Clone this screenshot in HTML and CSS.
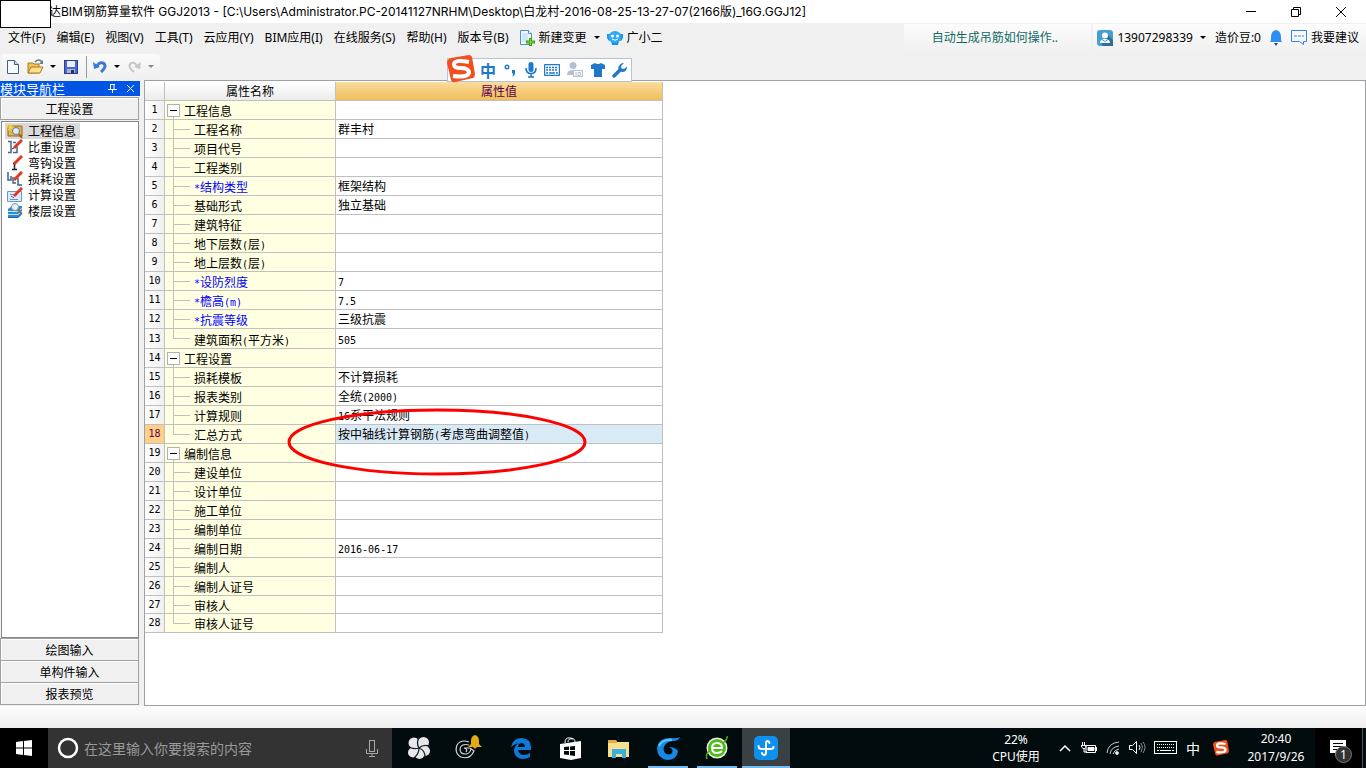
FILE: index.html
```html
<!DOCTYPE html>
<html lang="zh-CN">
<head>
<meta charset="utf-8">
<title>BIM钢筋算量软件 GGJ2013</title>
<link rel="stylesheet" href="styles.css">
</head>
<body>
<div class="desktop">
<header class="titlebar">
  <span class="mask"></span>
  <h1 class="title">达BIM钢筋算量软件 GGJ2013 - [C:\Users\Administrator.PC-20141127NRHM\Desktop\白龙村-2016-08-25-13-27-07(2166版)_16G.GGJ12]</h1>
  <div class="winctl">
    <button aria-label="最小化"><svg width="12" height="12"><path d="M1 5.5h10" stroke="#000"/></svg></button>
    <button aria-label="还原"><svg width="12" height="12" fill="none" stroke="#000"><path d="M1.500 3.500h7v7h-7zM3.500 3.500v-2h7v7h-2"/></svg></button>
    <button aria-label="关闭"><svg width="12" height="12"><path d="M1 1l10 10M11 1L1 11" stroke="#000"/></svg></button>
  </div>
</header>

<nav class="menubar">
  <button>文件(F)</button><button>编辑(E)</button><button>视图(V)</button><button>工具(T)</button><button>云应用(Y)</button><button>BIM应用(I)</button><button>在线服务(S)</button><button>帮助(H)</button><button>版本号(B)</button>
  <button class="iconbtn"><svg width="15" height="16"><path d="M.5.5h8l3 3v11H.5z" fill="#eef7fd" stroke="#4c94c8"/><path d="M2 3h6v9H2z" fill="#cfe8f6"/><path d="M8.500.5v3h3" fill="#fff" stroke="#4c94c8"/><path d="M9 8h3v2.500h3v3h-3V16H9v-2.500H6v-3h3z" fill="#3a9d14"/><path d="M10 9h1v6h-1zM7 11.500h7v1H7z" fill="#8cd33e"/></svg>新建变更<i class="caret"></i></button>
  <button class="iconbtn robot"><svg width="16" height="16"><path d="M0 4h3l1 6-2 1-2-3zM16 4h-3l-1 6 2 1 2-3zM4 11h8l-1 4H5z" fill="#1295e6"/><ellipse cx="8" cy="7" rx="6.500" ry="6" fill="#2eaaf2"/><circle cx="5.500" cy="6" r="1.500" fill="#fff"/><circle cx="10.500" cy="6" r="1.500" fill="#fff"/><path d="M5 9q3 2.500 6 0" fill="none" stroke="#fff"/></svg>广小二</button>
  <a class="tip" href="#">自动生成吊筋如何操作..</a>
  <div class="account">
    <button class="iconbtn"><svg width="16" height="16"><rect width="16" height="16" rx="3" fill="#459fd0"/><path d="M10 4l6 6v6H6l-2-3z" fill="#2c6f9b"/><circle cx="8" cy="5.500" r="3" fill="#fff"/><path d="M3 13q0-4 5-4t5 4z" fill="#fff"/><path d="M5 9.500l3 2 3-2" fill="none" stroke="#459fd0"/></svg>13907298339<i class="caret"></i></button>
    <span>造价豆:0</span>
    <button class="iconbtn bell" aria-label="消息"><svg width="12" height="16"><path d="M6 0q5 1 5 7v3l1 2H0l1-2V7q0-6 5-7z" fill="#2f8ef2"/><path d="M4 13h4l-2 3z" fill="#124a87"/></svg></button>
    <button class="iconbtn"><svg width="16" height="15" fill="none" stroke="#2a86e8"><path d="M.5.5h15v11h-3v3l-4-3h-8z"/><path d="M3 6h10" stroke-dasharray="3 1"/></svg>我要建议</button>
  </div>
</nav>

<div class="toolrow">
  <div class="toolbar">
    <button aria-label="新建"><svg width="12" height="14"><path d="M.5.5h7l4 4v9H.5z" fill="#f5fafd" stroke="#44607f"/><path d="M7.500.5v4h4" fill="#cfdeea" stroke="#44607f"/></svg></button>
    <button class="open" aria-label="打开"><svg width="17" height="15"><path d="M1 4h5l1 1h5v9H1z" fill="#f5c254" stroke="#a67a2b"/><path d="M4 8h12l-3 6H1z" fill="#ffdf8b" stroke="#a67a2b"/><path d="M8 3q4-4 7 0" fill="none" stroke="#607d94" stroke-width="1.500"/><path d="M16 1v4h-4z" fill="#607d94"/></svg><i class="caret"></i></button>
    <button aria-label="保存"><svg width="14" height="14"><rect x=".5" y=".5" width="13" height="13" fill="#4a66cf" stroke="#2c3a9a"/><path d="M3 1h8v6H3z" fill="#e9effa"/><path d="M3 9h8v4H3z" fill="#aab6c4"/><path d="M7 10h3v3H7z" fill="#20316f"/></svg></button>
    <i class="sep"></i>
    <button class="undo" aria-label="撤销"><svg width="14" height="13"><path d="M4 6q3-5 7-2.500Q14 7 8 12" fill="none" stroke="#3b78d2" stroke-width="3"/><path d="M0 2l1 7 6-2z" fill="#3b78d2"/></svg><i class="caret"></i></button>
    <button class="undo" aria-label="重做"><svg width="13" height="13"><path d="M9 6Q6 1 2.500 3.500-.5 7 6 12" fill="none" stroke="#c6c6c6" stroke-width="2"/><path d="M13 2l-1 7-6-2z" fill="#c6c6c6"/></svg><i class="caret dim"></i></button>
  </div>
</div>

<main class="work">
  <aside class="side">
    <div class="sidehead"><h2>模块导航栏</h2>
      <button aria-label="固定"><svg width="9" height="9"><path d="M2.500 0v5M6 0v5M2 .5h5M0 5.500h9M4.500 6v3" stroke="#fff" fill="none"/></svg></button>
      <button aria-label="关闭"><svg width="9" height="9"><path d="M1 1l7 7M8 1L1 8" stroke="#fff"/></svg></button>
    </div>
    <button class="sect first">工程设置</button>
    <ul class="modules">
      <li><button class="on"><svg width="16" height="16"><path d="M1 3h14v10H1z" fill="#e5b34b" stroke="#93691d"/><path d="M3 0v8M0 4h7M1 1l5 6M6 1L1 7" stroke="#ffdf39"/><circle cx="9" cy="8" r="3.500" fill="#d8edfd" stroke="#697b8d"/><path d="M12 11l3 4" stroke="#a35b18" stroke-width="2"/></svg><span>工程信息</span></button></li>
      <li><button><svg width="16" height="16" fill="none"><path d="M1 2.500h3v11H1M6 3.500h3M6 13.500h4v-8" stroke="#44658e" stroke-width="1.500"/><path d="M7 9l8-8" stroke="#e23823" stroke-width="3"/><path d="M5 10l2-1" stroke="#333"/></svg><span>比重设置</span></button></li>
      <li><button><svg width="16" height="16" fill="none"><path d="M7.500 8v7M6 8.500h3M5 14.500h5" stroke="#222" stroke-width="1.500"/><path d="M7 9l8-8" stroke="#e23823" stroke-width="3"/></svg><span>弯钩设置</span></button></li>
      <li><button><svg width="16" height="16" fill="none"><path d="M1 1v8h3V5M6 6v6h3M11 7v7h4" stroke="#3c618f" stroke-width="1.500"/><path d="M7 9l8-8" stroke="#e23823" stroke-width="3"/></svg><span>损耗设置</span></button></li>
      <li><button><svg width="16" height="16" fill="none"><path d="M.5 4.500h14v10H.5z" fill="#dceafa" stroke="#6c94c4"/><path d="M3 7.500h5M3 12.500h8" stroke="#6c94c4"/><path d="M7 9l8-8" stroke="#e23823" stroke-width="3"/><path d="M4 9l3 2" stroke="#35649b"/></svg><span>计算设置</span></button></li>
      <li><button><svg width="16" height="16" fill="none"><path d="M1 6l4-3h10v8l-4 4H1z" fill="#2b8bd2"/><path d="M1 8.500h10l4-3M1 11.500h10l4-3" stroke="#c7e5f8"/><path d="M1 14.500h10l4-4" stroke="#1a649f"/><circle cx="8" cy="4" r="3.500" fill="#e6f1f8" stroke="#8296a5"/><path d="M11 7l3 3" stroke="#a06930" stroke-width="2"/></svg><span>楼层设置</span></button></li>
    </ul>
    <button class="sect">绘图输入</button>
    <button class="sect">单构件输入</button>
    <button class="sect">报表预览</button>
  </aside>

  <section class="sheet">
    <div class="gridwrap">
    <table class="props">
      <thead><tr><th class="no"></th><th class="name">属性名称</th><th class="val">属性值</th></tr></thead>
      <tbody>
      <tr class="group"><th>1</th><td><button aria-label="折叠"></button>工程信息</td><td></td></tr>
      <tr><th>2</th><td>工程名称</td><td>群丰村</td></tr>
      <tr><th>3</th><td>项目代号</td><td></td></tr>
      <tr><th>4</th><td>工程类别</td><td></td></tr>
      <tr class="key"><th>5</th><td><b>*</b>结构类型</td><td>框架结构</td></tr>
      <tr><th>6</th><td>基础形式</td><td>独立基础</td></tr>
      <tr><th>7</th><td>建筑特征</td><td></td></tr>
      <tr><th>8</th><td>地下层数<b>(</b>层<b>)</b></td><td></td></tr>
      <tr><th>9</th><td>地上层数<b>(</b>层<b>)</b></td><td></td></tr>
      <tr class="key"><th>10</th><td><b>*</b>设防烈度</td><td><b>7</b></td></tr>
      <tr class="key"><th>11</th><td><b>*</b>檐高<b>(m)</b></td><td><b>7.5</b></td></tr>
      <tr class="key"><th>12</th><td><b>*</b>抗震等级</td><td>三级抗震</td></tr>
      <tr class="last tall"><th>13</th><td>建筑面积<b>(</b>平方米<b>)</b></td><td><b>505</b></td></tr>
      <tr class="group"><th>14</th><td><button aria-label="折叠"></button>工程设置</td><td></td></tr>
      <tr><th>15</th><td>损耗模板</td><td>不计算损耗</td></tr>
      <tr><th>16</th><td>报表类别</td><td>全统<b>(2000)</b></td></tr>
      <tr><th>17</th><td>计算规则</td><td><b>16</b>系平法规则</td></tr>
      <tr class="last current"><th>18</th><td>汇总方式</td><td>按中轴线计算钢筋<b>(</b>考虑弯曲调整值<b>)</b></td></tr>
      <tr class="group"><th>19</th><td><button aria-label="折叠"></button>编制信息</td><td></td></tr>
      <tr><th>20</th><td>建设单位</td><td></td></tr>
      <tr><th>21</th><td>设计单位</td><td></td></tr>
      <tr><th>22</th><td>施工单位</td><td></td></tr>
      <tr><th>23</th><td>编制单位</td><td></td></tr>
      <tr><th>24</th><td>编制日期</td><td><b>2016-06-17</b></td></tr>
      <tr><th>25</th><td>编制人</td><td></td></tr>
      <tr><th>26</th><td>编制人证号</td><td></td></tr>
      <tr class="short"><th>27</th><td>审核人</td><td></td></tr>
      <tr class="last"><th>28</th><td>审核人证号</td><td></td></tr>
      </tbody>
    </table>
    <svg class="mark" width="300" height="68"><ellipse cx="150" cy="34" rx="148" ry="32" fill="none" stroke="#f00" stroke-width="3"/></svg>
    </div>
  </section>
</main>
<div class="status"></div>

<div class="ime">
  <svg class="sogou" width="28" height="28" viewBox="0 0 28 28"><path d="M4 3l18-3q2 0 3 2l3 17q0 3-2 4L8 27q-3 1-4-2L0 8q0-4 4-5z" fill="#f0501e"/><path d="M22 7Q7 4 7 9.500 7 13 14 13t8 4q0 6-16 4" fill="none" stroke="#fff" stroke-width="4"/></svg>
  <button class="zh">中</button>
  <button aria-label="标点"><svg width="14" height="14"><circle cx="4" cy="4" r="1.800" fill="none" stroke="#1f78c8" stroke-width="1.400"/><path d="M9 7h3v3q0 3-3 3.500 1.500-1.500 1-3H9z" fill="#1f78c8"/></svg></button>
  <button aria-label="语音"><svg width="12" height="16"><rect x="3.500" width="5" height="10" rx="2.500" fill="#1f78c8"/><path d="M1 6q0 5.500 5 5.500T11 6M6 11v4M3 15h6" fill="none" stroke="#1f78c8" stroke-width="1.600"/></svg></button>
  <button aria-label="键盘"><svg width="16" height="12"><rect x=".5" y=".5" width="15" height="11" rx="1" fill="#fff" stroke="#1f78c8" stroke-width="1.400"/><path d="M2 3.500h12M2 6h12" stroke="#1f78c8" stroke-width="1.600" stroke-dasharray="2 1"/><path d="M2 9h2M5 9h6M12 9h2" stroke="#1f78c8" stroke-width="1.500"/></svg></button>
  <button aria-label="登录"><svg width="16" height="16"><circle cx="6" cy="3.500" r="3.500" fill="#b4bfd5"/><path d="M0 13q0-5 6-5t6 5z" fill="#b4bfd5"/><rect x="6.500" y="8.500" width="9" height="6" fill="#fff" stroke="#b4bfd5"/><path d="M9 10v4M11 10.500h2.500v3H11z" stroke="#b4bfd5" fill="none"/></svg></button>
  <button aria-label="皮肤"><svg width="14" height="14"><path d="M4 0q3 2 6 0l4 2v4h-3v8H3V6H0V2z" fill="#1f78c8"/></svg></button>
  <button aria-label="工具箱"><svg width="15" height="15"><path d="M2 13l6-6" stroke="#1f78c8" stroke-width="3.500" stroke-linecap="round"/><path d="M12 0L9 3l.5 2.500L12 6l3-2.500Q15 9 10 9 5.500 8 6.500 4 8 0 12 0z" fill="#1f78c8"/></svg></button>
</div>

<footer class="taskbar">
  <button class="start" aria-label="开始"><svg width="16" height="16" fill="#fff"><path d="M0 2l7-1v6.500H0zM8 1l8-1v7.500H8zM0 8.500h7V15l-7-1zM8 8.500h8V16l-8-1z"/></svg></button>
  <label class="search"><svg width="22" height="22"><circle cx="11" cy="11" r="9" fill="none" stroke="#fff" stroke-width="2.500"/></svg>
    <input type="text" placeholder="在这里输入你要搜索的内容" aria-label="搜索">
    <svg width="12" height="17" fill="none" stroke="#a8a8a8"><rect x="3.500" y=".5" width="5" height="11"/><path d="M.5 9v4.500h11V9M6 13.500v3M3 16.500h6"/></svg></label>
  <div class="apps">
    <button aria-label="风扇"><svg width="22" height="22"><g fill="#e8e8e8"><circle cx="6" cy="6" r="5.500"/><circle cx="15.500" cy="5.500" r="5.500"/><circle cx="17" cy="14" r="5"/><circle cx="11.500" cy="17" r="5"/><circle cx="5" cy="15.500" r="5"/><circle cx="11" cy="11" r="5"/></g><path d="M11 11Q8 6 11 0M11 11q4-4 11-2M11 11q6 2 6 9M11 11q0 6-5 10M11 11Q5 13 0 9" fill="none" stroke="#17262b" stroke-width="1.300"/></svg></button>
    <button aria-label="助手"><svg width="28" height="26" fill="none"><path d="M15 7Q7 4 3 10q-3 8 4 12 9 3 13-6l-4-3h-6q4 1 2 4" stroke="#d6d6d6" stroke-width="1.200"/><path d="M15 10q-8-2-9 4 0 5 5 5 5 0 6-5" stroke="#d6d6d6" stroke-width="1.200"/><path d="M21 0q4 1 4 6v3l3 3H14l3-3V6q0-5 4-6zM19 12h4l-2 2z" fill="#e3aa13"/></svg></button>
    <button class="edge" aria-label="Edge"><svg width="20" height="21"><path d="M0 9Q2 0 11 0q9 1 9 9v3H7q1 5 6 5 3 0 6-2v4q-3 2-8 2-8-1-8-9 1-5 5-7-5 1-8 4zm7 0h7q0-4-4-4-3 1-3 4z" fill="#0c7ad9"/></svg></button>
    <button aria-label="应用商店"><svg width="21" height="23"><path d="M5 6q0-6 5-5 5 0 5 4M8 5q0-4 5-3" fill="none" stroke="#fff"/><path d="M0 7l21-3v17l-10 2L0 21z" fill="#fff"/><path d="M4 10l5-.5V13H4zM10 9.500l5-.5v4h-5zM4 14h5v4l-5-.5zM10 14h5v5l-5-.7z" fill="#020b0e"/></svg></button>
    <button aria-label="资源管理器"><svg width="22" height="19"><path d="M0 1h8l1 2h12v15H0z" fill="#f9df8b"/><path d="M0 1h8l1 3H0z" fill="#e3ad42"/><path d="M4 10h14v9h-4v-4H8v4H4z" fill="#38b0de"/></svg></button>
    <button class="run" aria-label="广联达"><svg width="24" height="24"><path d="M24 1q-4 2-9 1Q3 1 1 12q0 10 10 12 10 0 11-9-3-4-9-4 5 2 3 6-3 3-7 0-3-4 0-8 3-4 9-4 4 0 6-4z" fill="#1689e4"/><path d="M3 10Q6 3 16 4" fill="none" stroke="#51c6fa" stroke-width="2"/></svg></button>
    <button class="run two" aria-label="浏览器"><svg width="24" height="24"><circle cx="12" cy="12" r="10.500" fill="#e6f2df"/><circle cx="12" cy="12" r="9" fill="#51b91c"/><path d="M7 12h10q0-5-5-5t-5 5q0 5 5 5 3 0 5-2" fill="none" stroke="#fff" stroke-width="2"/><path d="M22 0q1 3-4 7M2 23q-2-5 4-10" fill="none" stroke="#48ab16" stroke-width="1.500"/></svg></button>
    <button class="run active" aria-label="截图"><svg width="24" height="24"><rect width="24" height="24" rx="5" fill="#0e91ee"/><path d="M15.500 7q-.5-2-2-2Q12 5 12 8v8q0 3-2 3-1.500 0-2-2M4.500 10q0 3 3 3h9q3 0 3-2" fill="none" stroke="#fff" stroke-width="2" stroke-linecap="round"/></svg></button>
  </div>
  <div class="tray">
    <div class="two-line cpu"><span>22%</span><span>CPU使用</span></div>
    <button class="w24" aria-label="显示隐藏的图标"><svg width="12" height="8"><path d="M1 7l5-5 5 5" fill="none" stroke="#fff" stroke-width="1.500"/></svg></button>
    <button class="w24" aria-label="电池"><svg width="17" height="12" fill="none" stroke="#fff"><path d="M5 3.500h9.500v7h-9.500z"/><path d="M7 5.500h6v3H7z" fill="#fff"/><path d="M15.500 5v4M0 3.500h5v2q-2 3-4 0zM1.500 0v3M3.500 0v3M3 7v3h3"/></svg></button>
    <button class="w24" aria-label="网络"><svg width="14" height="14" fill="none" stroke="#ccc"><path d="M1 12Q2 2 13 1M4 13q1-7 9-8M7 13q1-4 6-5"/><circle cx="11" cy="12" r="1.500" fill="#fff"/></svg></button>
    <button class="w24" aria-label="音量"><svg width="17" height="14" fill="none" stroke="#fff"><path d="M.5 4.500h3l4-4v12l-4-4h-3zM10 4q2 2.500 0 5"/><path d="M12 2q3 4 0 9M14 1q4 5 0 11" stroke="#889"/></svg></button>
    <button class="w32" aria-label="触摸键盘"><svg width="23" height="14" fill="none" stroke="#fff"><rect x=".5" y=".5" width="22" height="12"/><path d="M3 3.500h17M3 6.500h17" stroke-dasharray="1 1"/><path d="M3 9.500h2M6 9.500h11M18 9.500h2"/></svg></button>
    <button class="w24 lang">中</button>
    <button class="w32" aria-label="搜狗"><svg width="16" height="16" viewBox="0 0 28 28"><path d="M4 3l18-3q2 0 3 2l3 17q0 3-2 4L8 27q-3 1-4-2L0 8q0-4 4-5z" fill="#f0501e"/><path d="M22 7Q7 4 7 9.500 7 13 14 13t8 4q0 6-16 4" fill="none" stroke="#fff" stroke-width="4"/></svg></button>
    <div class="two-line clock"><span>20:40</span><span>2017/9/26</span></div>
    <button class="note" aria-label="通知"><svg width="17" height="16"><path d="M0 0h16v13H8l-3 3v-3H0z" fill="#fff"/><path d="M3 3.500h10M3 6.500h10M3 9.500h6" stroke="#000"/></svg><span class="badge">1</span></button>
  </div>
</footer>
</div>
</body>
</html>
```
FILE: styles.css
```css
* { box-sizing: border-box; }
body { margin: 0; font: 12px/16px "Noto Sans", "Noto Sans CJK SC", sans-serif; color: #000; background: #f0f0f0; }
button { border: 0; padding: 0; background: none; font: inherit; color: inherit; white-space: nowrap; display: flex; align-items: center; justify-content: center; }
svg { display: block; flex: none; }
.desktop { min-height: 100vh; display: flex; flex-direction: column; position: relative; }

.titlebar { height: 23px; background: #fff; display: flex; align-items: center; padding-left: 49px; }
.mask { position: absolute; left: 0; top: 0; width: 51px; height: 28px; background: #fff; border: 1px solid #000; z-index: 2; }
.title { margin: 0; font: 12px/16px Inter, "Noto Sans CJK SC", sans-serif; white-space: nowrap; }
.winctl { margin-left: auto; display: flex; padding-right: 3px; }
.winctl button { width: 45px; height: 20px; }

.menubar { height: 29px; display: flex; align-items: center; gap: 11px; padding-left: 8px; }
.iconbtn { gap: 4px; }
.caret { width: 0; border: 3px solid transparent; border-top-color: #000; border-bottom: 0; margin-left: 3px; }
.caret.dim { border-top-color: #888; }
.robot { margin-left: -4px; }
.tip { margin-left: auto; width: 187px; height: 28px; line-height: 28px; padding-right: 6px; text-align: center; color: #0e6b64; text-decoration: none; background: linear-gradient(#fcfcfc, #f0f0f0); }
.account { height: 28px; display: flex; align-items: center; gap: 9px; margin-left: -9px; padding: 0 7px 0 4px; background: linear-gradient(#fcfcfc, #f0f0f0); white-space: nowrap; }

.toolrow { height: 28px; padding: 2px 0 0 1px; }
.toolbar { width: 159px; height: 25px; display: flex; align-items: center; gap: 8px; padding-left: 6px; background: linear-gradient(#fafafa, #f0f0f0); border-radius: 3px; }
.toolbar button { gap: 3px; }
.toolbar .undo { gap: 4px; }
.toolbar .sep + .undo { margin-left: -2px; }
.sep { width: 1px; height: 22px; background: #999; }

.work { flex: 1; display: flex; gap: 4px; min-height: 0; }
.side { width: 140px; flex: none; display: flex; flex-direction: column; font-family: "Noto Sans CJK SC", sans-serif; padding: 1px 1px 1px 0; }
.sidehead { height: 15px; margin-right: -1px; background: #0055e5; color: #fff; display: flex; align-items: center; gap: 9px; padding-right: 5px; }
.sidehead h2 { margin: 0 auto 0 0; font-size: 13px; line-height: 15px; font-weight: 400; }
.sect { height: 23px; flex: none; margin-top: -1px; border: 1px solid #a0a0a0; box-shadow: inset 1px 1px #fff; background: #f0f0f0; }
.sect.first { margin: 1px 0; }
.modules { flex: 1; list-style: none; margin: 0 0 1px 1px; padding: 1px 3px; background: #fff; border: 1px solid #828790; }
.modules button { height: 16px; gap: 3px; padding: 0 0 0 2px; }
.modules span { padding: 0 4px 0 2px; line-height: 16px; }
.modules .on { background: #d9d9d9; }

.sheet { flex: 1; background: #fff; border: 1px solid #a0a0a8; padding-top: 1px; font-family: "Noto Sans CJK SC", sans-serif; }
.gridwrap { position: relative; }
.mark { position: absolute; left: 142px; top: 326px; }
.props { border-collapse: separate; border-spacing: 0; table-layout: fixed; width: 518px; }
.props th, .props td { height: 19px; padding: 0; line-height: 16px; font-weight: 400; border-right: 1px solid #c0c0c0; border-bottom: 1px solid #c0c0c0; white-space: nowrap; }
.props b, .props tbody th { font-family: "DejaVu Sans Mono", monospace; font-size: 10px; font-weight: 400; }
.props b { line-height: 10px; }
.props th { background: linear-gradient(90deg, #fff, #f0f0f0); }
.props thead th { background: linear-gradient(#fff, #ececec); }
.props .no { width: 20px; }
.props .name { width: 171px; }
.props thead .val { background: linear-gradient(#fbdc9c, #f0bd5a); color: #5a0050; }
.props td:nth-child(2) { position: relative; padding: 2px 0 0 29px; line-height: 14px; background: #ffffe1; }
.props td:nth-child(3) { padding-left: 2px; }
.props td:nth-child(2)::before { content: ""; position: absolute; left: 8px; top: 0; bottom: -1px; border-left: 1px solid #c0c0c0; }
.props td:nth-child(2)::after { content: ""; position: absolute; left: 8px; top: 9px; width: 17px; border-top: 1px solid #c0c0c0; }
.props .last td:nth-child(2)::before { bottom: auto; height: 9px; }
.props .group td:nth-child(2) { padding-left: 19px; }
.props .group td:nth-child(2)::before { top: 16px; }
.props .group td:nth-child(2)::after { display: none; }
.props .group button { position: absolute; left: 2px; top: 3px; width: 13px; height: 13px; background: #fff; border: 1px solid #b0b0b0; }
.props .group button::before { content: ""; width: 7px; border-top: 1px solid #000; }
.props .key td:nth-child(2) { color: #00f; }
.props .tall td { height: 20px; }
.props .short th, .props .short td { height: 18px; }
.props .current th { background: #ffcf85; color: #5a0050; }
.props .current td:nth-child(3) { background: #d9eaf7; }

.status { height: 22px; background: linear-gradient(#fcfcfc, #f0f0f0); }

.ime { position: absolute; left: 447px; top: 58px; width: 185px; height: 24px; padding: 0 4px 0 32px; display: flex; align-items: center; justify-content: space-between; background: #fff; border: 1px solid #b4c4d8; }
.sogou { position: absolute; left: -1px; top: -4px; }
.zh { font: 700 16px/20px "Noto Sans CJK SC", sans-serif; color: #1f78c8; }

.taskbar { height: 40px; display: flex; background: #020b0e; color: #fff; }
.start { width: 48px; background: #000; }
.search { width: 344px; background: #333; display: flex; align-items: center; gap: 5px; padding: 0 14px 0 9px; }
.search input { flex: 1; min-width: 0; border: 0; outline: 0; padding: 0; background: none; color: #fff; font: 14px/20px "Noto Sans CJK SC", sans-serif; }
.search input::placeholder { color: #999; opacity: 1; }
.apps { display: flex; gap: 1px; padding-left: 3px; }
.apps button { width: 48px; border-bottom: 2px solid transparent; padding-top: 2px; }
.apps .edge { margin-left: 4px; }
.apps .run { background: linear-gradient(#76b9ed, #76b9ed) bottom / 40px 2px no-repeat border-box; }
.apps .active { background: #3a4145; border-bottom-color: #76b9ed; }
.tray { margin-left: auto; display: flex; align-items: stretch; padding-right: 3px; }
.two-line { display: flex; flex-direction: column; align-items: center; justify-content: center; line-height: 18px; }
.cpu { width: 74px; line-height: 17px; }
.w24 { width: 24px; }
.w32 { width: 32px; }
.lang { font: 14px/20px "Noto Sans CJK SC", sans-serif; }
.clock { width: 78px; }
.note { width: 48px; position: relative; background: #000; border-right: 1px solid #555; }
.badge { position: absolute; left: 20px; top: 18px; width: 17px; height: 17px; line-height: 15px; border-radius: 50%; background: #333; border: 1px solid #777; }
```
